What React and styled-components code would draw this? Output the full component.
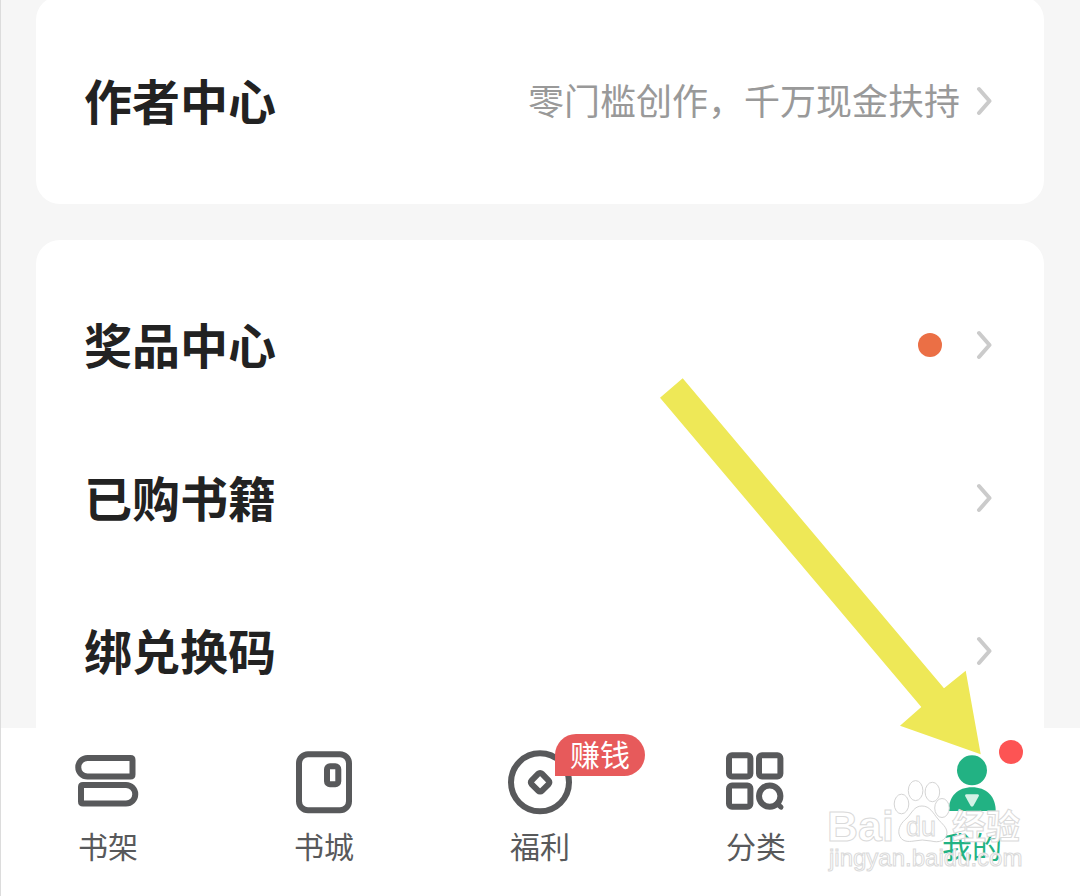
import styled, { createGlobalStyle } from 'styled-components';

const GlobalStyle = createGlobalStyle`
    * {
        box-sizing: border-box;
    }
    body {
        margin: 0;
        background-color: #f6f6f6;
        font-family: "Noto Sans CJK SC", "Noto Sans", sans-serif;
    }
    a {
        color: inherit;
        text-decoration: none;
    }
`

const Chevron = () => (
    <svg width="16" height="30" viewBox="0 0 16 30" fill="none" stroke="#cbcbcb" strokeWidth="4" strokeLinecap="round" strokeLinejoin="round" aria-hidden="true">
        <path d="M3 3 13.5 15 3 27" />
    </svg>
)

const ShelfIcon = () => (
    <TabIcon>
        <path d="M11.5 8H54.5Q56.5 8 56.5 10V24.5Q56.5 26.5 54.5 26.5H11.5A9.25 9.25 0 0 1 11.5 8Z" />
        <path d="M50 35H7Q5 35 5 37V51.5Q5 53.5 7 53.5H50A9.25 9.25 0 0 0 50 35Z" />
    </TabIcon>
)

const StoreIcon = () => (
    <TabIcon>
        <rect x="7" y="4.3" width="50" height="56" rx="9" />
        <rect x="35" y="16.3" width="11.3" height="18" rx="3" />
    </TabIcon>
)

const CoinIcon = () => (
    <TabIcon>
        <circle cx="32" cy="32.3" r="29" />
        <rect x="24.8" y="25" width="14.6" height="14.6" rx="2.5" transform="rotate(45 32.1 32.3)" />
    </TabIcon>
)

const CategoryIcon = () => (
    <TabIcon>
        <rect x="5" y="5.2" width="21.4" height="21.4" rx="3" />
        <rect x="35" y="5.2" width="21.4" height="21.4" rx="3" />
        <rect x="5" y="35.4" width="21.4" height="21.4" rx="3" />
        <circle cx="45.7" cy="46.1" r="10.7" />
        <path d="M53 53.5 57 57.2" strokeLinecap="round" strokeWidth="5" />
    </TabIcon>
)

const ProfileIcon = () => (
    <TabIcon>
        <g stroke="none">
            <circle cx="32" cy="20.3" r="15" fill="#22b283" />
            <path d="M8.7 61C8.7 46 18 37.3 32 37.3S55.7 46 55.7 61Z" fill="#22b283" />
            <path d="M26.5 44.3H37.5Q39.7 44.5 38.6 46.6L33.6 55.4Q32 57.8 30.4 55.4L25.4 46.6Q24.3 44.5 26.5 44.3Z" fill="#d3f2e6" />
        </g>
    </TabIcon>
)

const Arrow = () => (
    <ArrowSvg viewBox="660 378 321 377" aria-hidden="true">
        <path d="M682.7 378.3 944 688.3 965.7 670.7 980.7 754.3 900 725.7 921.3 707 660 397.7Z" fill="#eee857" />
    </ArrowSvg>
)

const Watermark = () => (
    <WatermarkSvg viewBox="824 776 200 100" aria-hidden="true">
        <g fill="#ffffff" stroke="#d4d4d4" strokeWidth="1">
            <ellipse cx="901.5" cy="804" rx="7.3" ry="9.8" />
            <ellipse cx="915.6" cy="790.6" rx="7.3" ry="10" />
            <ellipse cx="932.4" cy="792" rx="7.3" ry="9.7" />
            <ellipse cx="942" cy="808" rx="7.3" ry="9.5" />
            <path d="M922 806C914 806 912 813 907 818C901 823 898 828 899 834C901 842 908 842 914 841Q922 839 931 841C939 843 946 841 947 833C947 827 942 824 938 819C933 813 930 806 922 806Z" />
        </g>
        <Mark x="827" y="841" $size={43} $weight={700}>Bai</Mark>
        <Mark x="906" y="836" $size={27}>du</Mark>
        <Mark x="952" y="839" $size={34} $weight={700} $cjk>经验</Mark>
        <Mark x="829" y="866" $size={24}>jingyan.baidu.com</Mark>
    </WatermarkSvg>
)

const tabs = [
    { label: '书架', icon: ShelfIcon },
    { label: '书城', icon: StoreIcon },
    { label: '福利', icon: CoinIcon, badge: '赚钱' },
    { label: '分类', icon: CategoryIcon },
    { label: '我的', icon: ProfileIcon, active: true, dot: true },
]

const Row = ({ title, note, dot }) => (
    <RowLink href="#">
        <RowTitle>{title}</RowTitle>
        { note && <RowNote>{note}</RowNote> }
        { dot && <RowDot /> }
        <Chevron />
    </RowLink>
)

const App = () => {
    return (
        <Screen>
            <GlobalStyle />
            <Content>
                <Card>
                    <Row title="作者中心" note="零门槛创作，千万现金扶持" />
                </Card>
                <Card $open>
                    <Row title="奖品中心" dot />
                    <Row title="已购书籍" />
                    <Row title="绑兑换码" />
                </Card>
            </Content>
            <TabBar>
                { tabs.map(({ label, icon: Icon, badge, dot, active }) => (
                    <Tab href="#" key={label} $active={active}>
                        <IconBox>
                            <Icon />
                            { badge && <Badge>{badge}</Badge> }
                            { dot && <TabDot /> }
                        </IconBox>
                        {label}
                    </Tab>
                )) }
            </TabBar>
            <Arrow />
            <Watermark />
        </Screen>
    )
}

export default App

const Screen = styled.div`
    position: relative;
    display: flex;
    flex-direction: column;
    height: 100vh;
    overflow: hidden;
    border-left: 1px solid #dcdcdc;
`
const Content = styled.main`
    display: flex;
    flex-direction: column;
    flex: 1;
    gap: 36px;
    min-height: 0;
    padding: 0 36px 0 35px;
    /* the list is scrolled a little past its top edge */
    margin-top: -4px;
    overflow: hidden;
`
const Card = styled.section`
    flex: ${ props => props.$open ? '1 0 auto' : 'none'};
    padding: 28px 52px ${ props => props.$open ? '0' : '27px'} 48px;
    border-radius: ${ props => props.$open ? '24px 24px 0 0' : '24px'};
    background-color: #ffffff;
`
const RowLink = styled.a`
    display: flex;
    align-items: center;
    gap: 16px;
    height: 153px;
`
const RowTitle = styled.span`
    flex: 1;
    padding-bottom: 4px;
    font-size: 48px;
    font-weight: 700;
    line-height: 72px;
    color: #222222;
`
const RowNote = styled.span`
    padding-bottom: 4px;
    font-size: 36px;
    line-height: 54px;
    color: #999999;
`
const RowDot = styled.span`
    width: 24px;
    height: 24px;
    margin-right: 18px;
    border-radius: 50%;
    background-color: #eb6f45;
`
const TabBar = styled.nav`
    display: flex;
    height: 168px;
    margin-left: -1px;
    padding-top: 22px;
    background-color: #ffffff;
`
const Tab = styled.a`
    display: flex;
    flex: 1;
    flex-direction: column;
    align-items: center;
    gap: 10px;
    font-size: 30px;
    line-height: 42px;
    color: ${ props => props.$active ? '#22b283' : '#58595b'};
`
const IconBox = styled.span`
    position: relative;
    width: 64px;
    height: 64px;
`
const TabIcon = styled.svg.attrs({ viewBox: '0 0 64 64', 'aria-hidden': true })`
    display: block;
    width: 64px;
    height: 64px;
    fill: none;
    stroke: #58595b;
    stroke-width: 6px;
    overflow: visible;
`
const Badge = styled.span`
    position: absolute;
    top: -16px;
    left: 47px;
    padding: 0 15px 4px;
    border-radius: 21px 21px 21px 0;
    font-size: 30px;
    line-height: 38px;
    white-space: nowrap;
    color: #ffffff;
    background-color: #e75a5b;
`
const TabDot = styled.span`
    position: absolute;
    top: -10px;
    right: -19px;
    width: 24px;
    height: 24px;
    border-radius: 50%;
    background-color: #fd5454;
`
const ArrowSvg = styled.svg`
    position: absolute;
    right: 99px;
    bottom: 141px;
    width: 321px;
    height: 377px;
    pointer-events: none;
`
const WatermarkSvg = styled.svg`
    position: absolute;
    right: 56px;
    bottom: 20px;
    width: 200px;
    height: 100px;
    pointer-events: none;
`
const Mark = styled.text`
    font-family: ${ props => props.$cjk ? '"Noto Sans CJK SC"' : '"Liberation Sans"'}, sans-serif;
    font-size: ${ props => props.$size}px;
    font-weight: ${ props => props.$weight || 400};
    fill: #ffffff;
    stroke: #dadada;
    stroke-width: 1px;
`
